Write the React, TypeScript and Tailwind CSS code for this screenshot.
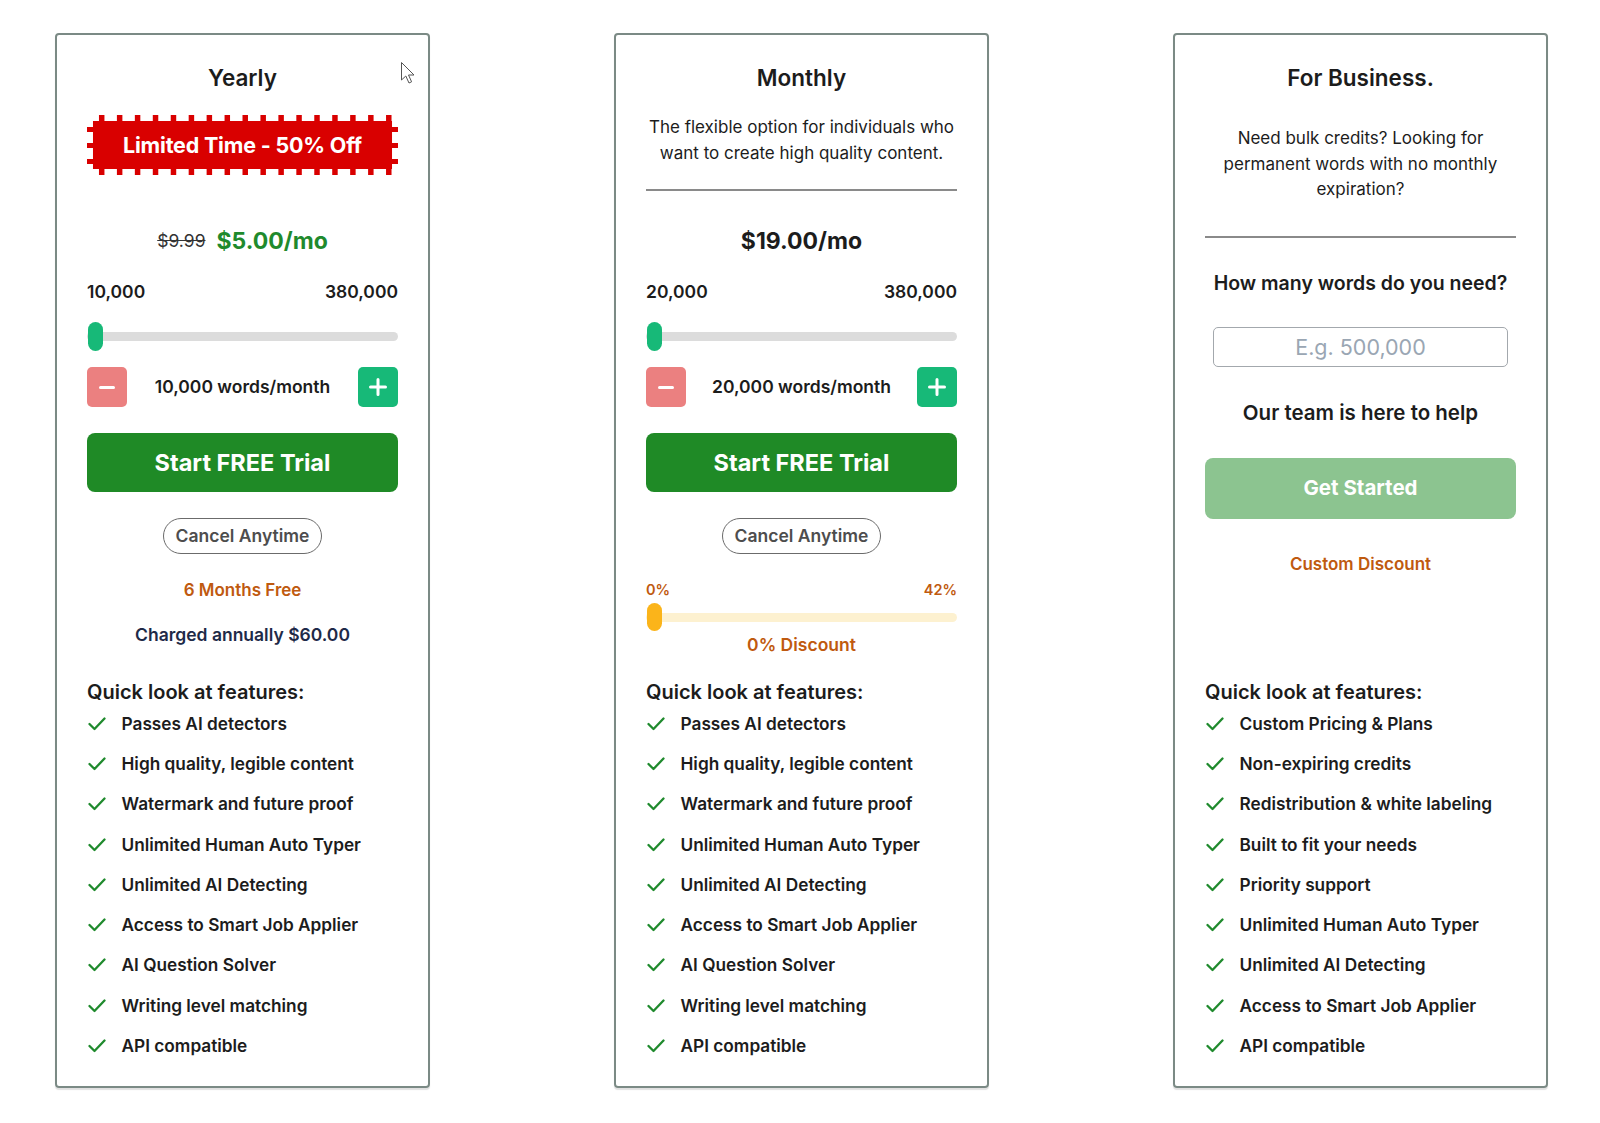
import React from "react";

const TEXT = "text-[#1c1c1c]";

const Check = () => (
  <svg width="18" height="14" viewBox="0 0 18 14" fill="none" className="shrink-0 ml-[1px]">
    <path d="M1.5 7 L6.5 12 L16.5 1.5" stroke="#1f8a2d" strokeWidth="2.3" strokeLinecap="round" strokeLinejoin="round" />
  </svg>
);

function Features({ items }: { items: string[] }) {
  return (
    <div className="mt-auto pb-[28px]">
      <div className={`text-[20px] leading-[26px] font-semibold ${TEXT}`}>Quick look at features:</div>
      <ul className="mt-[7px] flex flex-col gap-[16.3px]">
        {items.map((t) => (
          <li key={t} className={`flex items-center h-[24px] text-[17.25px] font-semibold ${TEXT}`}>
            <Check />
            <span className="ml-[15.5px]">{t}</span>
          </li>
        ))}
      </ul>
    </div>
  );
}

function Title({ children }: { children: React.ReactNode }) {
  return <div className={`text-center text-[22.5px] leading-[28px] font-semibold ${TEXT}`}>{children}</div>;
}

function WordSlider({ min, max, value }: { min: string; max: string; value: string }) {
  return (
    <>
      <div className={`mt-[25px] flex justify-between text-[17.5px] leading-[22px] font-semibold ${TEXT}`}>
        <span>{min}</span>
        <span>{max}</span>
      </div>
      <div className="mt-[18px] relative h-[30px] flex items-center">
        <div className="h-[9px] w-full rounded-full bg-[#dcdcdc]" />
        <div className="absolute left-[1px] top-[0.5px] h-[29px] w-[15px] rounded-full bg-[#17b978]" />
      </div>
      <div className="mt-[16px] flex items-center justify-between">
        <button className="w-[40px] h-[40px] rounded-[5px] bg-[#eb8080] flex items-center justify-center">
          <span className="block w-[16px] h-[3px] bg-white rounded-sm" />
        </button>
        <span className={`text-[17.5px] leading-[22px] font-semibold ${TEXT}`}>{value} words/month</span>
        <button className="w-[40px] h-[40px] rounded-[5px] bg-[#17b978] flex items-center justify-center">
          <svg width="18" height="18" viewBox="0 0 18 18">
            <path d="M9 1.5 V16.5 M1.5 9 H16.5" stroke="white" strokeWidth="3" strokeLinecap="round" />
          </svg>
        </button>
      </div>
      <button className="mt-[26px] h-[59px] w-full rounded-lg bg-[#1f8a26] text-white text-[23.5px] font-bold">
        Start FREE Trial
      </button>
      <div className="mt-[26px] flex justify-center">
        <span className="h-[36px] w-[159px] rounded-full border border-[#6b6b6b] flex items-center justify-center text-[17.5px] font-semibold text-[#4d4d4d]">
          Cancel Anytime
        </span>
      </div>
    </>
  );
}

function Badge() {
  const top: number[] = [];
  for (let i = 0; i < 17; i++) top.push(12 + i * 18);
  const side = [12, 28, 44];
  return (
    <div className="mt-[23px] relative h-[60px] flex items-center justify-center">
      <svg className="absolute inset-0" width="100%" height="60" viewBox="0 0 312 60" preserveAspectRatio="none">
        <rect x="6" y="6" width="300" height="48" fill="#d90000" />
        {top.map((x) => (
          <g key={x}>
            <rect x={x} y="0" width="5.5" height="7" fill="#d90000" />
            <rect x={x} y="53" width="5.5" height="7" fill="#d90000" />
          </g>
        ))}
        {side.map((y) => (
          <g key={y}>
            <rect x="0" y={y} width="7" height="5" fill="#d90000" />
            <rect x="305" y={y} width="7" height="5" fill="#d90000" />
          </g>
        ))}
      </svg>
      <span className="relative text-white text-[21.5px] font-bold tracking-[-0.2px]">Limited Time - 50% Off</span>
    </div>
  );
}

const card =
  "relative w-[375px] h-[1055px] shrink-0 border-2 border-[#7b8a85] rounded-[4px] px-[30px] pt-[29px] flex flex-col shadow-[0_2px_1px_rgba(0,0,0,0.12)]";

const commonFeatures = [
  "Passes AI detectors",
  "High quality, legible content",
  "Watermark and future proof",
  "Unlimited Human Auto Typer",
  "Unlimited AI Detecting",
  "Access to Smart Job Applier",
  "AI Question Solver",
  "Writing level matching",
  "API compatible",
];

const businessFeatures = [
  "Custom Pricing & Plans",
  "Non-expiring credits",
  "Redistribution & white labeling",
  "Built to fit your needs",
  "Priority support",
  "Unlimited Human Auto Typer",
  "Unlimited AI Detecting",
  "Access to Smart Job Applier",
  "API compatible",
];

export default function App() {
  return (
    <div className="min-h-[1123px] w-[1600px] bg-white font-[Inter,sans-serif] pt-[33px] pl-[55px] flex gap-[184px]">
      {/* Yearly */}
      <div className={card}>
        <Title>Yearly</Title>
        <Badge />
        <div className="mt-[51px] h-[30px] flex items-center justify-center gap-[11px]">
          <span className="text-[17.5px] text-[#333] line-through">$9.99</span>
          <span className="text-[23px] font-bold text-[#1f8a2d]">$5.00/mo</span>
        </div>
        <WordSlider min="10,000" max="380,000" value="10,000" />
        <div className="mt-[25px] text-center text-[17px] leading-[22px] font-semibold text-[#bf5a0f]">6 Months Free</div>
        <div className="mt-[23px] text-center text-[17.5px] leading-[22px] font-semibold text-[#1e2a48]">
          Charged annually $60.00
        </div>
        <Features items={commonFeatures} />
        <svg className="absolute left-[343px] top-[26px]" width="16" height="24" viewBox="0 0 16 24">
          <path d="M1.5 1.5 L1.5 19 L5.8 15 L9 22 L11.6 20.8 L8.5 14 L14 14 Z" fill="white" stroke="#555" strokeWidth="1" strokeLinejoin="round" />
        </svg>
      </div>

      {/* Monthly */}
      <div className={card}>
        <Title>Monthly</Title>
        <p className={`mt-[23px] text-center text-[17px] leading-[25.5px] ${TEXT}`}>
          The flexible option for individuals who want to create high quality content.
        </p>
        <div className="mt-[23px] h-[2px] bg-[#8a8a8a]" />
        <div className={`mt-[35px] h-[30px] flex items-center justify-center text-[23px] font-bold ${TEXT}`}>
          $19.00/mo
        </div>
        <WordSlider min="20,000" max="380,000" value="20,000" />
        <div className="mt-[26px] flex justify-between text-[14.5px] leading-[20px] font-semibold text-[#bf5a0f]">
          <span>0%</span>
          <span>42%</span>
        </div>
        <div className="mt-[3px] relative h-[28px] flex items-center">
          <div className="h-[9px] w-full rounded-full bg-[#fdf1d0]" />
          <div className="absolute left-[1px] top-0 h-[28px] w-[15px] rounded-full bg-[#fbb41a]" />
        </div>
        <div className="mt-[3px] text-center text-[17.5px] leading-[22px] font-semibold text-[#bf5a0f]">0% Discount</div>
        <Features items={commonFeatures} />
      </div>

      {/* Business */}
      <div className={card}>
        <Title>For Business.</Title>
        <p className={`mt-[34px] px-[10px] text-center text-[17px] leading-[25.5px] ${TEXT}`}>
          Need bulk credits? Looking for permanent words with no monthly expiration?
        </p>
        <div className="mt-[33px] h-[2px] bg-[#8a8a8a]" />
        <div className={`mt-[32px] text-center text-[19.5px] leading-[26px] font-semibold ${TEXT}`}>
          How many words do you need?
        </div>
        <input
          placeholder="E.g. 500,000"
          className="mt-[31px] mx-[8px] h-[40px] rounded-[5px] border border-[#a3a8ad] text-center text-[21.5px] placeholder:text-[#9aa6b3] outline-none"
        />
        <div className={`mt-[33px] text-center text-[20.5px] leading-[26px] font-semibold ${TEXT}`}>
          Our team is here to help
        </div>
        <button className="mt-[32px] h-[61px] w-full rounded-lg bg-[#8cc490] text-white text-[20.5px] font-bold">
          Get Started
        </button>
        <div className="mt-[34px] text-center text-[17px] leading-[22px] font-semibold text-[#bf5a0f]">Custom Discount</div>
        <Features items={businessFeatures} />
      </div>
    </div>
  );
}
